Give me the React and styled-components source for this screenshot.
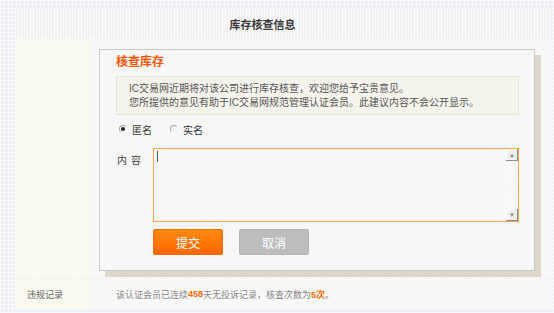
import React from 'react';
import styled, { createGlobalStyle } from 'styled-components';

const GlobalStyle = createGlobalStyle`
  html, body {
    margin: 0;
    padding: 0;
  }
  body {
    width: 554px;
    height: 313px;
    overflow: hidden;
    font-family: "Liberation Sans", "Noto Sans CJK SC", sans-serif;
    background-color: #edf1f7;
    background-image:
      repeating-linear-gradient(0deg, rgba(255,255,255,0.5) 0 1px, transparent 1px 4px),
      repeating-linear-gradient(90deg, rgba(255,255,255,0.5) 0 1px, transparent 1px 4px);
  }
`

const Page = styled.div`
  padding: 8px 2px 0 15px;
`

const Panel = styled.div`
  width: 537px;
  height: 301px;
  background: #f8f8f8;
  display: flex;
  flex-direction: column;
`

const Header = styled.div`
  height: 31px;
  display: flex;
  align-items: center;
  justify-content: center;
  padding-right: 42px;
  padding-top: 1px;
  box-sizing: border-box;
  background-color: #f2f2f2;
  background-image: repeating-linear-gradient(90deg, rgba(255,255,255,0.6) 0 1px, transparent 1px 3px);
  font-size: 11px;
  font-weight: bold;
  color: #3a3a3a;
`

const Row = styled.div`
  display: grid;
  grid-template-columns: 75px 1fr;
  height: ${p => p.$h}px;
  border-bottom: ${p => (p.$dashed ? '1px dashed #eeeeea' : 'none')};
  box-sizing: border-box;
`

const Label = styled.div`
  background: #fafaf0;
  display: flex;
  align-items: center;
  padding-left: 12px;
  font-size: 9px;
  color: #666;
`

const Cell = styled.div`
  padding: ${p => p.$pad};
  display: flex;
  align-items: ${p => (p.$center ? 'center' : 'flex-start')};
  font-size: 9px;
  color: #888;
`

const Hot = styled.span`
  color: #ff6a00;
  font-weight: bold;
`

const Dialog = styled.div`
  width: 436px;
  height: 222px;
  box-sizing: border-box;
  background: #f7f7f7;
  border: 1px solid #c9c9c9;
  box-shadow: 6px 6px 0 #dbd7cb;
  padding: 4px 15px 0 16px;
  display: flex;
  flex-direction: column;
`

const Title = styled.div`
  font-size: 12px;
  line-height: 16px;
  font-weight: bold;
  color: #ff5500;
`

const Notice = styled.div`
  margin-top: 6px;
  height: 39px;
  box-sizing: border-box;
  background: #f5f4ec;
  border: 1px solid #e7e5da;
  padding: 5px 12px 0;
  font-size: 10px;
  line-height: 14px;
  color: #555;
`

const RadioRow = styled.div`
  margin-top: 7px;
  height: 14px;
  display: flex;
  align-items: center;
  padding-left: 3px;
  font-size: 10px;
  color: #333;
`

const RadioItem = styled.label`
  display: flex;
  align-items: center;
  gap: 5px;
  margin-right: 18px;
`

const Dot = styled.span`
  width: 8px;
  height: 8px;
  border-radius: 50%;
  box-sizing: border-box;
  border: 1px solid #aaa;
  border-right-color: transparent;
  border-bottom-color: #eee;
  display: flex;
  align-items: center;
  justify-content: center;

  &::after {
    content: '';
    width: 4px;
    height: 4px;
    border-radius: 50%;
    background: ${p => (p.$on ? '#222' : 'transparent')};
  }
`

const FieldRow = styled.div`
  margin-top: 12px;
  display: flex;
  align-items: flex-start;
`

const FieldLabel = styled.div`
  width: 36px;
  padding: 4px 0 0 1px;
  font-size: 10px;
  letter-spacing: 4px;
  color: #444;
`

const TextBox = styled.div`
  position: relative;
  width: 367px;
  height: 74px;
  box-sizing: border-box;
  border: 1px solid #ffa64d;
  background: #f8f8f8;
  display: flex;
`

const Area = styled.textarea`
  flex: 1;
  border: none;
  outline: none;
  resize: none;
  background: transparent;
  padding: 3px;
  font-size: 10px;
  font-family: inherit;
`

const Caret = styled.span`
  position: absolute;
  left: 3px;
  top: 2px;
  width: 1px;
  height: 11px;
  background: #555;
`

const Scroll = styled.div`
  width: 12px;
  display: flex;
  flex-direction: column;
  justify-content: space-between;
  background: repeating-linear-gradient(45deg, #f4f4f4 0 1px, #fbfbfb 1px 3px);
`

const Arrow = styled.div`
  height: 12px;
  display: flex;
  align-items: center;
  justify-content: center;
  background: #f0f0f0;
  box-shadow: inset -1px -1px 0 #8a8a8a, inset 1px 1px 0 #fff;
  font-size: 6px;
  color: #888;
`

const Buttons = styled.div`
  margin-top: 7px;
  padding-left: 37px;
  display: flex;
  gap: 16px;
`

const Button = styled.button`
  width: 70px;
  height: 26px;
  border: 1px solid ${p => (p.$primary ? '#f26a00' : '#b5b5b5')};
  border-radius: 2px;
  background: ${p => (p.$primary ? 'linear-gradient(#ff8a10, #ff6600)' : '#bdbdbd')};
  color: #fff;
  font-size: 12px;
  font-family: inherit;
  padding: 0;
`

const App = () => {
  return (
    <>
      <GlobalStyle />
      <Page>
        <Panel>
          <Header>库存核查信息</Header>
          <Row $h={240} $dashed>
            <Label />
            <Cell $pad="10px 0 0 9px">
              <Dialog>
                <Title>核查库存</Title>
                <Notice>
                  <div>IC交易网近期将对该公司进行库存核查，欢迎您给予宝贵意见。</div>
                  <div>您所提供的意见有助于IC交易网规范管理认证会员。此建议内容不会公开显示。</div>
                </Notice>
                <RadioRow>
                  <RadioItem><Dot $on />匿名</RadioItem>
                  <RadioItem><Dot />实名</RadioItem>
                </RadioRow>
                <FieldRow>
                  <FieldLabel>内容</FieldLabel>
                  <TextBox>
                    <Area />
                    <Caret />
                    <Scroll>
                      <Arrow>▲</Arrow>
                      <Arrow>▼</Arrow>
                    </Scroll>
                  </TextBox>
                </FieldRow>
                <Buttons>
                  <Button $primary>提交</Button>
                  <Button>取消</Button>
                </Buttons>
              </Dialog>
            </Cell>
          </Row>
          <Row $h={30}>
            <Label>违规记录</Label>
            <Cell $pad="0 0 0 26px" $center>
              该认证会员已连续<Hot>458</Hot>天无投诉记录，核查次数为<Hot>5次</Hot>。
            </Cell>
          </Row>
        </Panel>
      </Page>
    </>
  );
}

export default App
